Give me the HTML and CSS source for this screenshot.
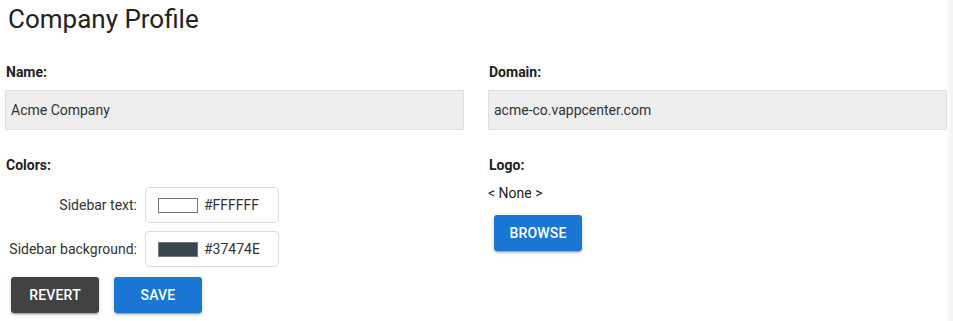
FILE: index.html
```html
<!DOCTYPE html>
<html lang="en">
<head>
    <meta charset="UTF-8">
    <meta name="viewport" content="width=device-width, initial-scale=1.0">
    <title>Company Profile</title>
    <link rel="stylesheet" href="styles.css">
</head>
<body>
    <h1 class="page-title">Company Profile</h1>

    <div class="profile-grid">
        <div class="field">
            <label class="field-label">Name:</label>
            <div class="text-input">Acme Company</div>
        </div>

        <div class="field">
            <label class="field-label">Domain:</label>
            <div class="text-input">acme-co.vappcenter.com</div>
        </div>

        <div class="field">
            <label class="field-label">Colors:</label>
            <div class="color-rows">
                <span class="color-name">Sidebar text:</span>
                <div class="color-input">
                    <span class="swatch swatch-light"></span>
                    <span class="hex">#FFFFFF</span>
                </div>
                <span class="color-name">Sidebar background:</span>
                <div class="color-input">
                    <span class="swatch swatch-dark"></span>
                    <span class="hex">#37474E</span>
                </div>
            </div>
            <div class="actions">
                <button class="btn btn-dark">Revert</button>
                <button class="btn btn-primary">Save</button>
            </div>
        </div>

        <div class="field">
            <label class="field-label">Logo:</label>
            <div class="logo-value">&lt; None &gt;</div>
            <div class="actions actions-logo">
                <button class="btn btn-primary">Browse</button>
            </div>
        </div>
    </div>

    <div class="edge-shadow"></div>
</body>
</html>
```

FILE: styles.css
```css
:root {
    --text: #212121;
    --muted: #333333;
    --input-bg: #eeeeee;
    --input-border: #e0e0e0;
    --primary: #1976d2;
    --dark: #424242;
}

* {
    margin: 0;
    padding: 0;
    box-sizing: border-box;
}

body {
    background: #ffffff;
    color: var(--text);
    font-family: Roboto, 'Liberation Sans', sans-serif;
    font-size: 14px;
    line-height: 16px;
    min-height: 100vh;
}

.page-title {
    font-size: 26px;
    font-weight: 400;
    line-height: 32px;
    padding: 3px 8px 0;
    color: #222222;
}

.profile-grid {
    display: grid;
    grid-template-columns: 1fr 1fr;
    column-gap: 24px;
    row-gap: 27px;
    padding: 0 6px 0 5px;
    margin-top: 29px;
}

.field {
    display: flex;
    flex-direction: column;
    align-items: flex-start;
}

.field-label {
    font-weight: 700;
    padding-left: 1px;
    margin-bottom: 10px;
}

.text-input {
    width: 100%;
    height: 40px;
    display: flex;
    align-items: center;
    padding: 0 5px;
    background: var(--input-bg);
    border: 1px solid var(--input-border);
    color: var(--muted);
}

.color-rows {
    display: grid;
    grid-template-columns: 132px 134px;
    grid-auto-rows: 36px;
    column-gap: 8px;
    row-gap: 8px;
    align-items: center;
    margin-top: 4px;
}

.color-name {
    text-align: right;
    color: var(--muted);
}

.color-input {
    height: 100%;
    display: flex;
    align-items: center;
    gap: 6px;
    padding-left: 12px;
    border: 1px solid #dcdcdc;
    border-radius: 4px;
    color: var(--muted);
}

.swatch {
    width: 40px;
    height: 15px;
    border: 1px solid #777777;
}

.swatch-light {
    background: #ffffff;
}

.swatch-dark {
    background: #37474e;
}

.actions {
    display: flex;
    gap: 15px;
    padding-left: 6px;
    margin-top: 10px;
}

.actions-logo {
    margin-top: 14px;
}

.logo-value {
    margin-top: 2px;
    color: var(--text);
}

.btn {
    width: 88px;
    height: 36px;
    border: none;
    border-radius: 3px;
    color: #ffffff;
    font-family: Roboto, 'Liberation Sans', sans-serif;
    font-size: 14px;
    font-weight: 500;
    text-transform: uppercase;
    letter-spacing: 0.2px;
    cursor: pointer;
    box-shadow: 0 3px 1px -2px rgba(0, 0, 0, 0.2), 0 2px 2px 0 rgba(0, 0, 0, 0.14), 0 1px 5px 0 rgba(0, 0, 0, 0.12);
}

.btn-dark {
    background: var(--dark);
}

.btn-primary {
    background: var(--primary);
}

.edge-shadow {
    position: absolute;
    top: 0;
    right: 0;
    width: 8px;
    height: 100%;
    background: linear-gradient(to right, rgba(0, 0, 0, 0), rgba(0, 0, 0, 0.05));
}
```
